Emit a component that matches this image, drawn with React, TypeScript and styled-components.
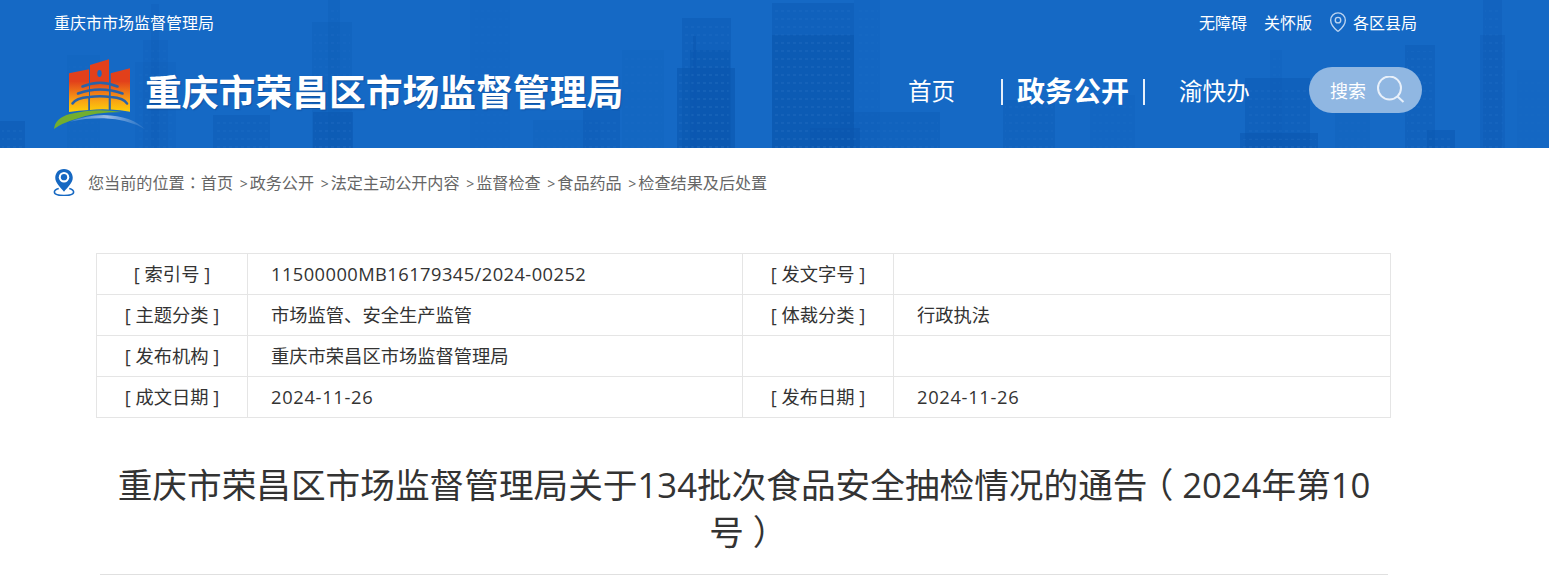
import styled, { createGlobalStyle } from 'styled-components';
import { MapPin } from 'lucide-react';

const FONT = '"Open Sans", "Noto Sans CJK SC", sans-serif';

const GlobalStyle = createGlobalStyle`
  html, body {
    margin: 0;
    padding: 0;
    background: #fff;
    font-family: ${FONT};
    overflow: hidden;
  }
`;

const infoRows = [
  [['[ 索引号 ]'], ['11500000MB16179345/2024-00252', 0.45], ['[ 发文字号 ]'], ['']],
  [['[ 主题分类 ]'], ['市场监管、安全生产监管'], ['[ 体裁分类 ]'], ['行政执法']],
  [['[ 发布机构 ]'], ['重庆市荣昌区市场监督管理局'], [''], ['']],
  [['[ 成文日期 ]'], ['2024-11-26', 0.7], ['[ 发布日期 ]'], ['2024-11-26', 0.7]],
] as [string, number?][][];

const crumbs = ['政务公开', '法定主动公开内容', '监督检查', '食品药品', '检查结果及后处置'];

// x, width, top, strength of each block in the skyline behind the header
const towers = [
  [0, 25, 121, 0.45], [67, 33, 55, 0.1], [143, 25, 40, 0.18], [151, 8, 4, 0.18], [135, 41, 62, 0.12],
  [213, 57, 115, 0.35], [312, 40, 22, 0.2], [328, 12, 0, 0.2], [313, 40, 112, 0.5],
  [470, 40, 0, 0.06], [533, 67, 120, 0.15], [583, 37, 110, 0.35], [622, 42, 50, 0.1],
  [677, 58, 68, 0.6], [690, 40, 50, 0.6], [693, 3, 36, 0.6], [682, 49, 18, 0.4],
  [772, 82, 35, 0.6], [772, 82, 3, 0.42], [854, 26, 0, 0.12], [840, 100, 112, 0.3],
  [810, 50, 128, 0.5], [1003, 52, 100, 0.3], [1090, 45, 95, 0.12], [1245, 65, 78, 0.4],
  [1270, 12, 50, 0.12], [1240, 78, 133, 0.5], [1335, 35, 110, 0.15], [1405, 30, 45, 0.35],
  [1427, 28, 130, 0.5], [1480, 25, 35, 0.28], [1483, 19, 0, 0.28], [1517, 32, 70, 0.08],
];

function Skyline() {
  return (
    <SkylineSvg viewBox="0 0 1549 148">
      <defs>
        <pattern id="windows" width="6" height="8" patternUnits="userSpaceOnUse">
          <rect x="1" y="2" width="3" height="2" fill="#3f86d2" opacity="0.2" />
        </pattern>
      </defs>
      {towers.map(([x, w, y, s], i) => (
        <g key={i} opacity={s}>
          <rect x={x} y={y} width={w} height={148 - y} fill="#0b57b0" />
          <rect x={x + 2} y={y + 6} width={Math.max(w - 4, 0)} height={Math.max(142 - y, 0)} fill="url(#windows)" />
        </g>
      ))}
    </SkylineSvg>
  );
}

function Logo() {
  return (
    <LogoSvg viewBox="0 0 92 72">
      <defs>
        <linearGradient id="wall" gradientUnits="userSpaceOnUse" x1="0" y1="0" x2="0" y2="53">
          <stop offset="0.42" stopColor="#e2401b" />
          <stop offset="0.8" stopColor="#f9a614" />
          <stop offset="1" stopColor="#fdd008" />
        </linearGradient>
        <linearGradient id="swoosh" x1="0" y1="0" x2="1" y2="0">
          <stop offset="0" stopColor="#6f9fd8" stopOpacity="0.5" />
          <stop offset="0.5" stopColor="#a9c4e6" stopOpacity="0.9" />
          <stop offset="1" stopColor="#6f9fd8" stopOpacity="0.2" />
        </linearGradient>
      </defs>
      <path d="M15 14.3 L35 10.3 V51 Q25 51.5 15 53 Z" fill="url(#wall)" />
      <path d="M36 6 L55 0.3 V50.5 Q45 50 36 51 Z" fill="url(#wall)" />
      <path d="M56.7 14.3 L76 9.3 V52.7 Q66 51 56.7 50.6 Z" fill="url(#wall)" />
      <ellipse cx="45.5" cy="14.5" rx="2.2" ry="3.4" fill="#1a69c0" />
      <g fill="none" stroke="#2a62a8" strokeWidth="2.6" strokeLinecap="round">
        <path d="M28.5 27.5 Q46 20 63.5 27.5" />
        <path d="M24 34.5 Q46 26.5 68.5 34.5" />
        <path d="M18.5 44.5 Q22 39 35 38 Q46 36.5 57 38 Q70 39 73 44.5" />
        <path d="M35 38 V51 M55.5 38 V50.5" strokeWidth="1.6" strokeLinecap="butt" />
      </g>
      <path d="M0 70 Q1 59 16 55 Q40 48.5 68 53 Q40 53 22 60 Q8 64 0 70 Z" fill="#72ae30" />
      <path d="M16 62.7 Q32 56 50 56 Q78 57 91 70.3 Q74 60 50 59.3 Q32 59 16 62.7 Z" fill="url(#swoosh)" />
    </LogoSvg>
  );
}

function LocationIcon() {
  return (
    <CrumbIcon viewBox="0 0 24 32">
      <path
        d="M12 1 C5.6 1 2 5.6 2 11 C2 17 8 22 12 27 C16 22 22 17 22 11 C22 5.6 18.4 1 12 1 Z"
        fill="#1668c2"
      />
      <circle cx="12" cy="10.5" r="6" fill="#fff" />
      <circle cx="12" cy="10.5" r="3.6" fill="#1668c2" />
      <path
        d="M6 23.5 C2.5 24.5 1 26 1 27.5 C1 30 6 31.5 12 31.5 C18 31.5 23 30 23 27.5 C23 26 21.5 24.5 18 23.5"
        fill="none"
        stroke="#1668c2"
        strokeWidth="1.8"
      />
    </CrumbIcon>
  );
}

function SearchIcon() {
  return (
    <SearchSvg viewBox="0 0 28 28">
      <circle cx="12.5" cy="12" r="11.5" fill="none" stroke="#e8f0fa" strokeWidth="2" />
      <path d="M20.5 20.5 L26.5 26" stroke="#e8f0fa" strokeWidth="2" />
    </SearchSvg>
  );
}

export default function App() {
  return (
    <>
      <GlobalStyle />
      <Header>
        <Skyline />
        <TopBar>
          <SiteName>重庆市市场监督管理局</SiteName>
          <TopLinks>
            <span>无障碍</span>
            <span>关怀版</span>
            <RegionLink>
              <MapPin size={22} strokeWidth={1.5} color="#bcd4f0" />
              各区县局
            </RegionLink>
          </TopLinks>
        </TopBar>
        <MainBar>
          <Brand>
            <Logo />
            <BrandTitle>重庆市荣昌区市场监督管理局</BrandTitle>
          </Brand>
          <Nav>
            <NavItem $width={93}>首页</NavItem>
            <NavDivider />
            <NavItem $active $width={126}>政务公开</NavItem>
            <NavDivider />
            <NavItem $width={90} $indent={20}>渝快办</NavItem>
            <SearchButton>
              搜索
              <SearchIcon />
            </SearchButton>
          </Nav>
        </MainBar>
      </Header>

      <Breadcrumb>
        <LocationIcon />
        <CrumbText>您当前的位置<CrumbColon>：</CrumbColon>首页</CrumbText>
        {crumbs.map((c) => (
          <CrumbText key={c}>
            <CrumbArrow>&gt;</CrumbArrow>
            {c}
          </CrumbText>
        ))}
      </Breadcrumb>

      <Content>
        <InfoTable>
          <colgroup>
            <col width={151} />
            <col width={495} />
            <col width={151} />
            <col />
          </colgroup>
          <tbody>
            {infoRows.map((r) => (
              <tr key={r[0][0]}>
                <LabelCell>{r[0][0]}</LabelCell>
                <ValueCell $spacing={r[1][1]}>{r[1][0]}</ValueCell>
                <LabelCell>{r[2][0]}</LabelCell>
                <ValueCell $spacing={r[3][1]}>{r[3][0]}</ValueCell>
              </tr>
            ))}
          </tbody>
        </InfoTable>
        <ArticleTitle>
          重庆市荣昌区市场监督管理局关于134批次食品安全抽检情况的通告<Paren>（</Paren>2024年第10号<Paren>）</Paren>
        </ArticleTitle>
      </Content>
    </>
  );
}

const Header = styled.header`
  position: relative;
  height: 148px;
  background: #1569c5;
  color: #fff;
  overflow: hidden;
`;

const SkylineSvg = styled.svg`
  position: absolute;
  inset: 0;
  width: 100%;
  height: 100%;
`;

const TopBar = styled.div`
  position: relative;
  display: flex;
  justify-content: space-between;
  height: 47px;
  padding: 0 132px 0 54px;
  font-size: 16px;
  line-height: 47px;
`;

const SiteName = styled.span``;

const TopLinks = styled.div`
  display: flex;
  gap: 17px;
`;

const RegionLink = styled.span`
  display: flex;
  align-items: center;
  gap: 4px;
  margin-left: -2px;

  svg {
    margin-top: -3px;
  }
`;

const MainBar = styled.div`
  position: relative;
  display: flex;
  justify-content: space-between;
  padding: 12px 127px 0 54px;
`;

const Brand = styled.div`
  display: flex;
  align-items: flex-start;
`;

const LogoSvg = styled.svg`
  width: 92px;
  height: 72px;
  margin-right: -1px;
  flex: none;
`;

const BrandTitle = styled.h1`
  margin: 8px 0 0;
  font-size: 36.8px;
  line-height: 50px;
  font-weight: 700;
  text-shadow: 1px 1px 1px rgba(12, 60, 130, 0.5);
`;

const Nav = styled.nav`
  display: flex;
  align-items: center;
  height: 66px;
  margin-top: -2px;
`;

const NavItem = styled.span<{ $active?: boolean; $width: number; $indent?: number }>`
  width: ${(p) => p.$width}px;
  padding-left: ${(p) => p.$indent ?? 0}px;
  padding-bottom: ${(p) => (p.$active ? 0 : 1)}px;
  box-sizing: border-box;
  font-size: ${(p) => (p.$active ? 28 : 23.6)}px;
  font-weight: ${(p) => (p.$active ? 700 : 400)};
  white-space: nowrap;
`;

const NavDivider = styled.i`
  width: 2px;
  height: 26px;
  margin: 4px 14px 0 0;
  background: #e6effa;
`;

const SearchButton = styled.div`
  display: flex;
  align-items: center;
  gap: 11px;
  width: 113px;
  height: 46px;
  margin-left: 60px;
  padding-left: 21px;
  box-sizing: border-box;
  border-radius: 23px;
  background: #90b7e2;
  font-size: 18px;
`;

const SearchSvg = styled.svg`
  width: 28px;
  height: 28px;
`;

const CrumbColon = styled.span`
  font-family: "Noto Sans CJK TC", sans-serif;
  line-height: 1;
`;

// the reference's full-width brackets sit centred in their cell
const Paren = styled.span`
  margin: 0 8.67px;
  font-feature-settings: "halt";
  line-height: 1;
`;

const Breadcrumb = styled.div`
  display: flex;
  align-items: center;
  height: 70px;
  padding: 0 0 2px 53px;
  box-sizing: border-box;
  font-size: 16.13px;
  color: #666;
`;

const CrumbIcon = styled.svg`
  width: 22px;
  height: 28px;
  margin-right: 13px;
`;

const CrumbText = styled.span`
  margin-right: 2.6px;
  white-space: nowrap;
`;

const CrumbArrow = styled.span`
  margin: 0 2px 0 4px;
  font-size: 14px;
`;

const Content = styled.main`
  width: 1295px;
  margin: 35px 0 0 96px;
`;

const InfoTable = styled.table`
  width: 100%;
  table-layout: fixed;
  border-collapse: collapse;
  font-size: 18.3px;
  color: #333;
`;

const LabelCell = styled.td`
  height: 41px;
  padding: 0 0 2px;
  box-sizing: border-box;
  border: 1px solid #e5e5e5;
  text-align: center;
  white-space: nowrap;
`;

const ValueCell = styled(LabelCell)<{ $spacing?: number }>`
  padding-left: 23px;
  text-align: left;
  letter-spacing: ${(p) => p.$spacing ?? 0}px;
`;

const ArticleTitle = styled.h2`
  margin: 43px 3px 0 4px;
  padding-bottom: 19px;
  border-bottom: 1px solid #e0e0e0;
  font-size: 34.67px;
  line-height: 47px;
  font-weight: 400;
  text-align: center;
  color: #333;
`;
